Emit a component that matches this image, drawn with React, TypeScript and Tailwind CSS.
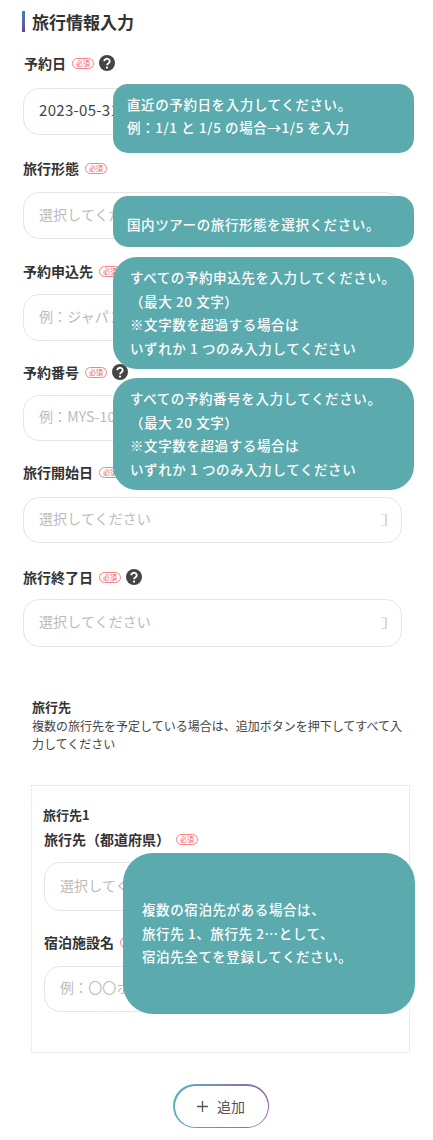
function Req() {
  return (
    <span className="inline-flex h-[11px] w-[22px] shrink-0 items-center justify-center rounded-full border-[1.5px] border-[#f5808a] bg-white text-[7px] leading-none text-[#ee5a66]">
      必須
    </span>
  );
}
function Help() {
  return (
    <svg width="16" height="16" viewBox="0 0 16 16" className="shrink-0">
      <circle cx="8" cy="8" r="8" fill="#444" />
      <path d="M5.3 6.2a2.7 2.5 0 1 1 4.2 2.1c-.9.6-1.4 1-1.4 1.9" fill="none" stroke="#fff" strokeWidth="1.9" />
      <circle cx="8" cy="12.6" r="1.15" fill="#fff" />
    </svg>
  );
}
function Label({ text, help, className = "" }: { text: string; help?: boolean; className?: string }) {
  return (
    <div className={`flex h-4 items-center gap-[5px] ${className}`}>
      <span className="mr-px whitespace-nowrap text-[14px] font-bold leading-none text-[#333]">{text}</span>
      <Req />
      {help && <Help />}
    </div>
  );
}
function Field({ text, dark, cal, className = "" }: { text: string; dark?: boolean; cal?: boolean; className?: string }) {
  return (
    <div className={`flex items-center justify-between rounded-[16px] border-[1.5px] border-[#e6e6e6] bg-white pl-[15px] pr-[14px] ${className}`}>
      <span className={`pb-[3px] whitespace-nowrap ${dark ? "text-[15px] tracking-[0.3px] text-[#444]" : "text-[14px] tracking-[0.1px] text-[#bbb]"}`}>{text}</span>
      {cal && <span className="h-[12px] w-[6px] rounded-r-[1px] border-y border-r-2 border-y-[#ddd] border-r-[#e2d2ea]" />}
    </div>
  );
}
function Tip({ className, lines }: { className: string; lines: string[] }) {
  return (
    <div className={`absolute flex flex-col justify-center bg-[#5baaae] text-[13.5px] font-medium tracking-[0.6px] text-white ${className}`}>
      {lines.map((l) => (
        <div key={l} className="whitespace-nowrap">{l}</div>
      ))}
    </div>
  );
}
export default function App() {
  return (
    <div className="relative h-[1140px] w-[433px] overflow-hidden bg-white font-['Noto_Sans_CJK_JP','Noto_Sans',sans-serif] text-[#333]">
      <div className="px-[23px] pt-[11px]">
        <div className="flex h-[21px] items-center gap-[7px]">
          <span className="-ml-px h-[21px] w-[3px] bg-linear-to-b from-[#3f86a8] to-[#6a3f9a]" />
          <span className="text-[17px] font-bold leading-none">旅行情報入力</span>
        </div>
        <Label text="予約日" help className="mt-[23px] ml-px" />
        <Field text="2023-05-31" dark className="mt-[17px] mr-[8px] h-[47px]" />
        <Label text="旅行形態" className="mt-[25px]" />
        <Field text="選択してください" className="mt-[16px] mr-[8px] h-[47px]" />
        <Label text="予約申込先" className="mt-[24px]" />
        <Field text="例：ジャパン" className="mt-[15px] mr-[8px] h-[47px]" />
        <Label text="予約番号" help className="mt-[23px]" />
        <Field text="例：MYS-1000" className="mt-[15px] mr-[8px] h-[46px]" />
        <Label text="旅行開始日" help className="mt-[23px]" />
        <Field text="選択してください" cal className="mt-[17px] mr-[8px] h-[46px]" />
        <Label text="旅行終了日" help className="mt-[26px]" />
        <Field text="選択してください" cal className="mt-[14px] mr-[8px] h-[48px]" />
      </div>
      <div className="ml-[32px] mt-[50px] w-[374px]">
        <div className="text-[13px] font-bold leading-[20px]">旅行先</div>
        <div className="text-[12px] leading-[18px] text-[#444]">複数の旅行先を予定している場合は、追加ボタンを押下してすべて入力してください</div>
      </div>
      <div className="ml-[31px] mt-[32px] h-[268px] w-[379px] border border-dotted border-[#ddd] pl-[11px] pr-[11px] pt-[19px]">
        <div className="text-[13px] font-bold leading-[20px]">旅行先1</div>
        <Label text="旅行先（都道府県）" className="mt-[6px] ml-px" />
        <Field text="選択してください" className="mt-[15px] ml-px h-[49px]" />
        <Label text="宿泊施設名" className="mt-[23px] ml-px" />
        <Field text="例：〇〇ホテル" className="mt-[16px] ml-px h-[46px]" />
      </div>
      <div className="ml-[173px] mt-[31px] h-[44px] w-[96px] rounded-full bg-linear-to-r from-[#5baec0] to-[#8a5fae] p-[1.5px]">
        <div className="flex h-full items-center justify-center gap-[9px] rounded-full bg-white text-[14px] text-[#555]">
          <svg width="11" height="11" viewBox="0 0 11 11"><path d="M5.5 0v11M0 5.5h11" stroke="#555" strokeWidth="1.3" /></svg>
          追加
        </div>
      </div>
      <Tip className="left-[113px] top-[84px] h-[69px] w-[301px] rounded-[15px] pb-[5px] pl-[14px] leading-[23.5px]" lines={["直近の予約日を入力してください。", "例：1/1 と 1/5 の場合→1/5 を入力"]} />
      <Tip className="left-[113px] top-[196px] h-[51px] w-[301px] rounded-[15px] pl-[14px] pt-[5px]" lines={["国内ツアーの旅行形態を選択ください。"]} />
      <Tip className="left-[113px] top-[257px] h-[112px] w-[301px] rounded-[24px] pl-[17px] leading-[23.5px]" lines={["すべての予約申込先を入力してください。", "（最大 20 文字）", "※文字数を超過する場合は", "いずれか 1 つのみ入力してください"]} />
      <Tip className="left-[113px] top-[378px] h-[112px] w-[301px] rounded-[24px] pl-[17px] leading-[23.5px]" lines={["すべての予約番号を入力してください。", "（最大 20 文字）", "※文字数を超過する場合は", "いずれか 1 つのみ入力してください"]} />
      <Tip className="left-[123px] top-[853px] h-[161px] w-[292px] rounded-[30px] pl-[19px] leading-[23.5px]" lines={["複数の宿泊先がある場合は、", "旅行先 1、旅行先 2…として、", "宿泊先全てを登録してください。"]} />
    </div>
  );
}
